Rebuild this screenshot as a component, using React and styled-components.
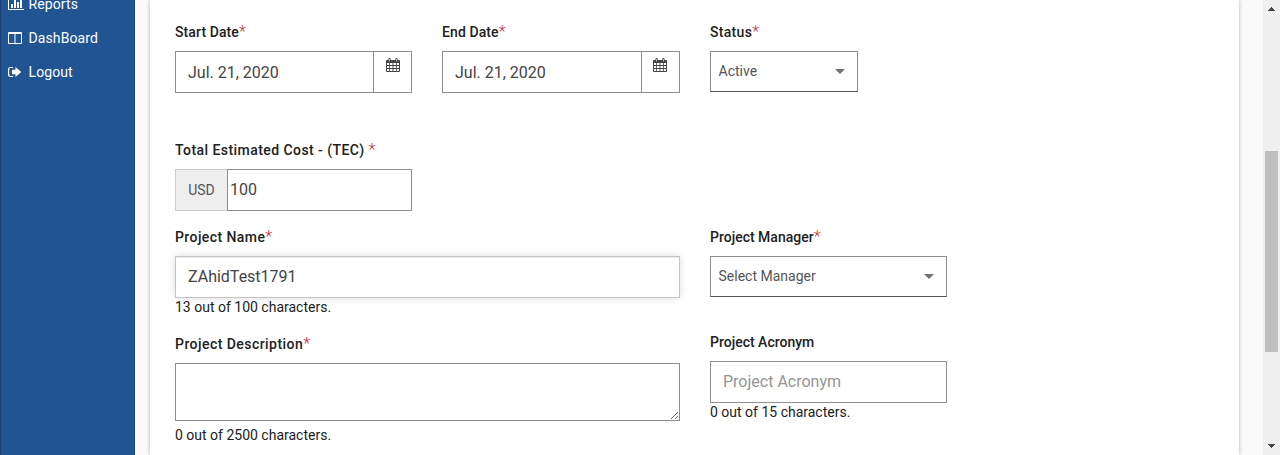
import React from "react";
import styled, { createGlobalStyle } from "styled-components";

const GlobalStyle = createGlobalStyle`
  * { box-sizing: border-box; }
  body {
    margin: 0;
    overflow: hidden;
    background: #fafafa;
    color: #212121;
    font-family: Roboto, "Liberation Sans", sans-serif;
    font-size: 14px;
  }
`;

const Page = styled.div`
  display: flex;
  width: 1280px;
  height: 455px;
  overflow: hidden;
`;

const Sidebar = styled.nav`
  flex: none;
  width: 135px;
  background: #205493;
  border: solid #1b4278;
  border-width: 0 1px;
  height: 455px;
  overflow: hidden;
`;

const MenuList = styled.ul`
  list-style: none;
  margin: -13px 0 0;
  padding: 0;
`;

const MenuItem = styled.li`
  display: flex;
  align-items: center;
  height: 34px;
  padding-left: 7px;
  color: #fff;
  font-weight: 400;
  letter-spacing: 0.1px;
  line-height: 20px;
`;

const MenuIcon = styled.svg`
  flex: none;
  width: ${(p) => p.$w}px;
  height: 14px;
  margin-right: ${(p) => 20.5 - p.$w}px;
  fill: #fff;
`;

const Main = styled.main`
  flex: 1;
  padding: 0 24px 0 15px;
`;

const Card = styled.section`
  height: 455px;
  padding: 22px 25px 0;
  background: #fff;
  box-shadow: 0 0 4px rgba(0, 0, 0, 0.28);
`;

const Row = styled.div`
  display: grid;
  grid-template-columns: 237px 238px 237px;
  column-gap: 30px;
  margin-bottom: ${(p) => p.$gap}px;
`;

const Columns = styled.div`
  display: grid;
  grid-template-columns: 505px 237px;
  column-gap: 30px;
  align-items: start;
`;

const Field = styled.div`
  margin-bottom: ${(p) => p.$gap || 0}px;
`;

const LabelText = styled.label`
  display: block;
  height: 20px;
  margin-bottom: 9px;
  line-height: 20px;
  font-weight: 500;
  white-space: nowrap;
  letter-spacing: ${(p) => p.$spacing || 0}px;
`;

const Required = styled.span`
  color: #bf2b45;
  font-size: 16px;
  font-weight: 300;
  line-height: 16px;
  letter-spacing: 0;
`;

const Control = styled.div`
  display: flex;
  height: 42px;
`;

const Input = styled.input`
  flex: 1;
  min-width: 0;
  height: 42px;
  margin: 0;
  padding: 0 12px ${(p) => (p.$raised ? 2 : 0)}px;
  border: 1px solid ${(p) => (p.$focused ? "#c4c4c4" : "#8f8f8f")};
  border-radius: 0;
  outline: 0;
  background: #fff;
  color: #444;
  font: 400 16px/20px Roboto, "Liberation Sans", sans-serif;
  box-shadow: ${(p) => (p.$focused ? "0 0 8px rgba(0, 0, 0, 0.13), inset 0 1px 1px rgba(0, 0, 0, 0.075)" : "none")};
  &::placeholder { color: #959595; opacity: 1; }
`;

const AmountInput = styled(Input)`
  padding: 0 2px 2px;
`;

const CalendarButton = styled.button`
  flex: none;
  display: flex;
  justify-content: center;
  align-items: flex-start;
  width: 38px;
  padding: 6px ${(p) => p.$shift || 0}px 0 0;
  border: 1px solid #8f8f8f;
  border-left: 0;
  background: #fff;
`;

const Currency = styled.span`
  flex: none;
  display: flex;
  align-items: center;
  justify-content: center;
  width: 52px;
  padding-bottom: 1px;
  border: 1px solid #ccc;
  border-right: 0;
  background: #eee;
  color: #555;
`;

const SelectBox = styled.div`
  display: flex;
  align-items: center;
  justify-content: space-between;
  width: ${(p) => p.$w}px;
  height: 41px;
  padding: 0 12px 0 7.5px;
  border: 1px solid #8f8f8f;
  border-bottom-color: #555;
  color: #555;
`;

const SelectValue = styled.span`
  padding-bottom: 2px;
`;

const Caret = styled.span`
  border: 5px solid transparent;
  border-top-color: #737373;
  border-bottom: 0;
`;

const TextArea = styled.textarea`
  display: block;
  width: 100%;
  height: 58px;
  margin: 0;
  border: 1px solid #8f8f8f;
  border-radius: 0;
  outline: 0;
  resize: both;
`;

const Counter = styled.div`
  height: 18px;
  margin-top: ${(p) => p.$top || 0}px;
  line-height: 18px;
  white-space: nowrap;
`;

const Scrollbar = styled.div`
  flex: none;
  display: flex;
  flex-direction: column;
  align-items: center;
  width: 17px;
  height: 455px;
  padding: 7px 0;
  background: #f0f0f0;
`;

const Thumb = styled.div`
  width: 13px;
  height: 201px;
  margin: 140px 0 auto;
  background: #bfbfbf;
`;

const ArrowIcon = styled.svg`
  flex: none;
  width: 7px;
  height: 4px;
  fill: #454545;
`;

const CalendarIcon = () => (
  <svg width="14" height="15" viewBox="0 0 14 15" fill="#444">
    <path
      fillRule="evenodd"
      d="M1 2h1.500V1a.9.9 0 0 1 .9-.9h.4a.9.9 0 0 1 .9.9v1h4.600V1a.9.9 0 0 1 .9-.9h.4a.9.9 0 0 1 .9.9v1H13a1 1 0 0 1 1 1v10.100a1 1 0 0 1-1 1H1a1 1 0 0 1-1-1V3a1 1 0 0 1 1-1zM3.300 1v2.500h.6V1zM10.100 1v2.500h.6V1zM1 5v2h2.200V5zM4 5v2h2.500V5zM7.400 5v2h2.500V5zM10.800 5v2H13V5zM1 8v2h2.200V8zM4 8v2h2.500V8zM7.400 8v2h2.500V8zM10.800 8v2H13V8zM1 11v2h2.200V11zM4 11v2h2.500V11zM7.400 11v2h2.500V11zM10.800 11v2H13V11z"
    />
  </svg>
);

const Label = ({ children, required, spacing }) => (
  <LabelText $spacing={spacing}>
    {children}
    {required && <Required>*</Required>}
  </LabelText>
);

const DateField = ({ label, spacing, iconShift }) => (
  <Field>
    <Label required spacing={spacing}>{label}</Label>
    <Control>
      <Input defaultValue="Jul. 21, 2020" />
      <CalendarButton aria-label="Open calendar" $shift={iconShift}>
        <CalendarIcon />
      </CalendarButton>
    </Control>
  </Field>
);

const Select = ({ value, width }) => (
  <SelectBox $w={width}>
    <SelectValue>{value}</SelectValue>
    <Caret />
  </SelectBox>
);

export default function App() {
  return (
    <>
      <GlobalStyle />
      <Page>
        <Sidebar>
          <MenuList>
            <MenuItem>
              <MenuIcon $w={16} viewBox="0 0 16 14">
                <path d="M0 1h1v11h15v1H0zM3 7h2v4H3zM6 3h2v8H6zM9 5h2v6H9zM12 2h2v9h-2z" />
              </MenuIcon>
              Reports
            </MenuItem>
            <MenuItem>
              <MenuIcon $w={14} viewBox="0 0 14 14">
                <path fillRule="evenodd" d="M1 1h12a1 1 0 0 1 1 1v10a1 1 0 0 1-1 1H1a1 1 0 0 1-1-1V2a1 1 0 0 1 1-1zM1 3v9h5.500V3zM7.500 3v9H13V3z" />
              </MenuIcon>
              DashBoard
            </MenuItem>
            <MenuItem>
              <MenuIcon $w={14} viewBox="0 0 14 14">
                <path d="M5 2v1.100H2.500A1.300 1.300 0 0 0 1.200 4.400v5.200a1.300 1.300 0 0 0 1.300 1.300H5V12H2.500A2.500 2.500 0 0 1 0 9.500v-5A2.500 2.500 0 0 1 2.500 2zM7.500 2 13.200 7l-5.700 5V9.200H4V4.800h3.500z" />
              </MenuIcon>
              Logout
            </MenuItem>
          </MenuList>
        </Sidebar>
        <Main>
          <Card>
            <Row $gap={47}>
              <DateField label="Start Date" spacing={0.1} />
              <DateField label="End Date" spacing={0.1} iconShift={2} />
              <Field>
                <Label required spacing={0.3}>Status</Label>
                <Select value="Active" width={148} />
              </Field>
            </Row>
            <Row $gap={16}>
              <Field>
                <Label required spacing={0.44}>{"Total Estimated Cost - (TEC) "}</Label>
                <Control>
                  <Currency>USD</Currency>
                  <AmountInput defaultValue="100" />
                </Control>
              </Field>
            </Row>
            <Columns>
              <div>
                <Field $gap={18}>
                  <Label required spacing={0.42}>Project Name</Label>
                  <Control>
                    <Input $focused $raised defaultValue="ZAhidTest1791" />
                  </Control>
                  <Counter>13 out of 100 characters.</Counter>
                </Field>
                <Field>
                  <Label required spacing={0.45}>Project Description</Label>
                  <TextArea />
                  <Counter $top={5}>0 out of 2500 characters.</Counter>
                </Field>
              </div>
              <div>
                <Field $gap={35}>
                  <Label required>Project Manager</Label>
                  <Select value="Select Manager" width={237} />
                </Field>
                <Field>
                  <Label>Project Acronym</Label>
                  <Control>
                    <Input $raised placeholder="Project Acronym" />
                  </Control>
                  <Counter>0 out of 15 characters.</Counter>
                </Field>
              </div>
            </Columns>
          </Card>
        </Main>
        <Scrollbar>
          <ArrowIcon viewBox="0 0 7 4" shapeRendering="crispEdges">
            <path d="M3 0h1v1h1v1h1v1h1v1H0V3h1V2h1V1h1z" />
          </ArrowIcon>
          <Thumb />
          <ArrowIcon viewBox="0 0 7 4" shapeRendering="crispEdges">
            <path d="M0 0h7v1H6v1H5v1H4v1H3V3H2V2H1V1H0z" />
          </ArrowIcon>
        </Scrollbar>
      </Page>
    </>
  );
}
